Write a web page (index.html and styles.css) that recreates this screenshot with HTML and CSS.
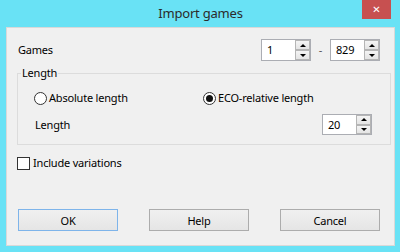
FILE: index.html
```html
<!DOCTYPE html>
<html lang="en">
<head>
    <meta charset="UTF-8">
    <title>Import games</title>
    <link rel="stylesheet" href="styles.css">
</head>
<body>
    <div class="window">
        <div class="titlebar">
            <span class="title">Import games</span>
            <button class="close">&#x2715;</button>
        </div>
        <div class="client">
            <div class="row games-row">
                <span class="label">Games</span>
                <div class="range">
                    <div class="spin wide"><span class="value">1</span><div class="arrows"><span class="up"></span><span class="down"></span></div></div>
                    <span class="dash">-</span>
                    <div class="spin wide"><span class="value">829</span><div class="arrows"><span class="up"></span><span class="down"></span></div></div>
                </div>
            </div>
            <fieldset class="group">
                <legend>Length</legend>
                <div class="group-body">
                    <div class="radios">
                        <label class="radio"><span class="dot"></span>Absolute length</label>
                        <label class="radio checked"><span class="dot"></span>ECO-relative length</label>
                    </div>
                    <div class="row length-row">
                        <span class="label">Length</span>
                        <div class="spin"><span class="value">20</span><div class="arrows"><span class="up"></span><span class="down"></span></div></div>
                    </div>
                </div>
            </fieldset>
            <label class="check"><span class="box"></span>Include variations</label>
            <div class="buttons">
                <button class="btn default">OK</button>
                <button class="btn">Help</button>
                <button class="btn">Cancel</button>
            </div>
        </div>
    </div>
</body>
</html>
```
FILE: styles.css
```css
body {
    margin: 0;
    font-family: "Noto Sans", sans-serif;
    font-size: 11px;
    line-height: 16px;
    letter-spacing: -0.2px;
    color: #000;
}
.window {
    width: 400px;
    height: 252px;
    background-color: #69e2f5;
    box-sizing: border-box;
    padding: 0 5px 6px 6px;
    display: flex;
    flex-direction: column;
}
.titlebar {
    position: relative;
    height: 27px;
    display: flex;
    align-items: center;
    justify-content: center;
}
.title {
    font-size: 13px;
    color: #2b2b2b;
    margin-bottom: 1px;
}
.close {
    position: absolute;
    top: 0;
    right: 4px;
    width: 29px;
    height: 19px;
    border: none;
    padding: 0;
    background-color: #c75050;
    color: #fff;
    font-size: 10px;
    font-weight: bold;
    font-family: "DejaVu Sans", sans-serif;
}
.client {
    flex: 1;
    background-color: #f0f0f0;
    border: 1px solid #d9d9d9;
    display: flex;
    flex-direction: column;
    padding: 0 14px 14px 11px;
}
.row {
    display: flex;
    align-items: center;
    justify-content: space-between;
}
.games-row {
    margin-top: 11px;
    height: 22px;
}
.range {
    display: flex;
    align-items: center;
}
.dash {
    width: 19px;
    text-align: center;
    color: #555;
}
.spin {
    width: 50px;
    height: 21px;
    box-sizing: border-box;
    border: 1px solid #abadb3;
    background-color: #fff;
    display: flex;
    justify-content: space-between;
}
.spin.wide {
    height: 22px;
}
.value {
    padding-left: 5px;
    line-height: 19px;
}
.arrows {
    width: 15px;
    display: flex;
    flex-direction: column;
}
.arrows span {
    flex: 1;
    box-sizing: border-box;
    border: 1px solid #b5b5b5;
    background: linear-gradient(#f4f4f4, #e4e4e4);
    display: flex;
    align-items: center;
    justify-content: center;
}
.arrows span::after {
    content: "";
    border-left: 3px solid transparent;
    border-right: 3px solid transparent;
}
.arrows .up::after {
    border-bottom: 3px solid #000;
}
.arrows .down::after {
    border-top: 3px solid #000;
}
.group {
    margin: 4px -2px 0 -1px;
    padding: 0;
    border: 1px solid #dcdcdc;
}
.group legend {
    padding: 0 1px;
    margin-left: 3px;
}
.group-body {
    padding: 0 18px 9px 16px;
}
.radios {
    display: flex;
    margin-top: 9px;
    height: 16px;
    align-items: center;
}
.radio {
    display: flex;
    align-items: center;
    width: 169px;
}
.dot {
    width: 13px;
    height: 13px;
    box-sizing: border-box;
    border: 1px solid #333;
    border-radius: 50%;
    background-color: #fff;
    margin-right: 2px;
    display: flex;
    align-items: center;
    justify-content: center;
}
.checked .dot::after {
    content: "";
    width: 7px;
    height: 7px;
    border-radius: 50%;
    background-color: #111;
}
.length-row {
    margin-top: 8px;
    padding-left: 1px;
}
.check {
    display: flex;
    align-items: center;
    margin-top: 10px;
    margin-left: -1px;
}
.box {
    width: 13px;
    height: 13px;
    box-sizing: border-box;
    border: 1px solid #333;
    background-color: #fff;
    margin-right: 3px;
}
.buttons {
    margin-top: auto;
    display: flex;
    justify-content: space-between;
}
.btn {
    width: 100px;
    height: 22px;
    font-family: inherit;
    font-size: 11px;
    letter-spacing: -0.2px;
    color: #000;
    border: 1px solid #acacac;
    background: linear-gradient(#f0f0f0, #e5e5e5);
    padding: 0;
}
.btn.default {
    border-color: #7eb4ea;
}
```
